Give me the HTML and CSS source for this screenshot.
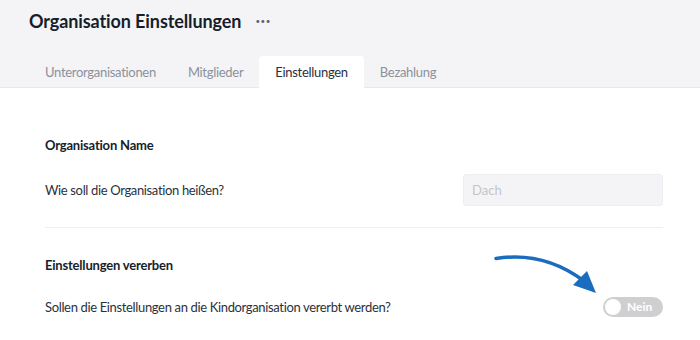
FILE: index.html
```html
<!DOCTYPE html>
<html lang="de">
  <head>
    <meta charset="UTF-8" />
    <meta name="viewport" content="width=device-width, initial-scale=1.0" />
    <link rel="stylesheet" href="styles.css">
  </head>
  <body>
    <div class="header">
      <div class="title-row">
        <h1>Organisation Einstellungen</h1>
        <span class="more">&bull;&bull;&bull;</span>
      </div>
      <nav class="tabs">
        <a class="tab">Unterorganisationen</a>
        <a class="tab">Mitglieder</a>
        <a class="tab active">Einstellungen</a>
        <a class="tab">Bezahlung</a>
      </nav>
    </div>

    <div class="content">
      <section class="section">
        <h2>Organisation Name</h2>
        <div class="row">
          <label>Wie soll die Organisation heißen?</label>
          <input class="field" type="text" placeholder="Dach" />
        </div>
      </section>
      <section class="section last">
        <h2>Einstellungen vererben</h2>
        <div class="row">
          <label>Sollen die Einstellungen an die Kindorganisation vererbt werden?</label>
          <span class="toggle"><span class="knob"></span>Nein</span>
        </div>
      </section>

      <!-- hint arrow pointing at the toggle -->
      <svg class="hint-arrow" width="120" height="50" viewBox="490 250 120 50">
        <path d="M496 257.5 C530 252 560 262 584 280" fill="none" stroke="#1c6cbd" stroke-width="3.5" stroke-linecap="round" />
        <polygon points="587,270 596,292 573,284" fill="#1c6cbd" />
      </svg>
    </div>
  </body>
</html>
```

FILE: styles.css
```css
* {
  margin: 0;
  padding: 0;
  box-sizing: border-box;
}
body {
  font-family: "Lato", "Open Sans", sans-serif;
  color: #1d2433;
  background: #fff;
}
.header {
  background: #f4f4f6;
  border-bottom: 1px solid #e7e8eb;
  padding: 0 29px;
}
.title-row {
  height: 56px;
  display: flex;
  align-items: center;
  padding-bottom: 15px;
}
h1 {
  font-size: 18px;
  font-weight: 700;
  color: #161e2c;
  letter-spacing: -0.1px;
}
.more {
  margin-left: 14px;
  font-size: 8px;
  letter-spacing: 0.5px;
  color: #5c6370;
}
.tabs {
  display: flex;
  height: 31px;
}
.tab {
  display: flex;
  align-items: center;
  padding: 0 16px;
  font-size: 13px;
  letter-spacing: -0.3px;
  color: #8b919c;
  border-radius: 4px 4px 0 0;
}
.tab.active {
  background: #fff;
  color: #2a303b;
  margin-bottom: -1px;
}
.content {
  position: relative;
  margin-left: 45px;
  width: 618px;
}
.section {
  padding-top: 49px;
  border-bottom: 1px solid #eeeff1;
  height: 140px;
}
.section.last {
  border-bottom: none;
  padding-top: 29px;
  height: auto;
}
.section.last .row {
  margin-top: 18px;
}
h2 {
  font-size: 13px;
  line-height: 16px;
  font-weight: 700;
  letter-spacing: -0.2px;
  color: #161e2c;
}
.row {
  display: flex;
  align-items: center;
  justify-content: space-between;
  margin-top: 21px;
  height: 32px;
}
label {
  font-size: 13px;
  letter-spacing: -0.35px;
  color: #2b313c;
}
.field {
  width: 200px;
  height: 32px;
  background: #f4f4f6;
  border: 1px solid #eceef1;
  border-radius: 3px;
  padding: 0 8px;
  font-family: inherit;
  font-size: 13px;
}
.field::placeholder {
  color: #c2c5ca;
}
.toggle {
  display: flex;
  align-items: center;
  gap: 6px;
  width: 60px;
  height: 20px;
  border-radius: 10px;
  background: #cfcfd1;
  padding: 2px;
  color: #fff;
  font-size: 12px;
  font-weight: 700;
  margin-top: -1px;
}
.knob {
  width: 16px;
  height: 16px;
  border-radius: 50%;
  background: #fff;
}
.hint-arrow {
  position: absolute;
  left: 445px;
  top: 163px;
}
```
